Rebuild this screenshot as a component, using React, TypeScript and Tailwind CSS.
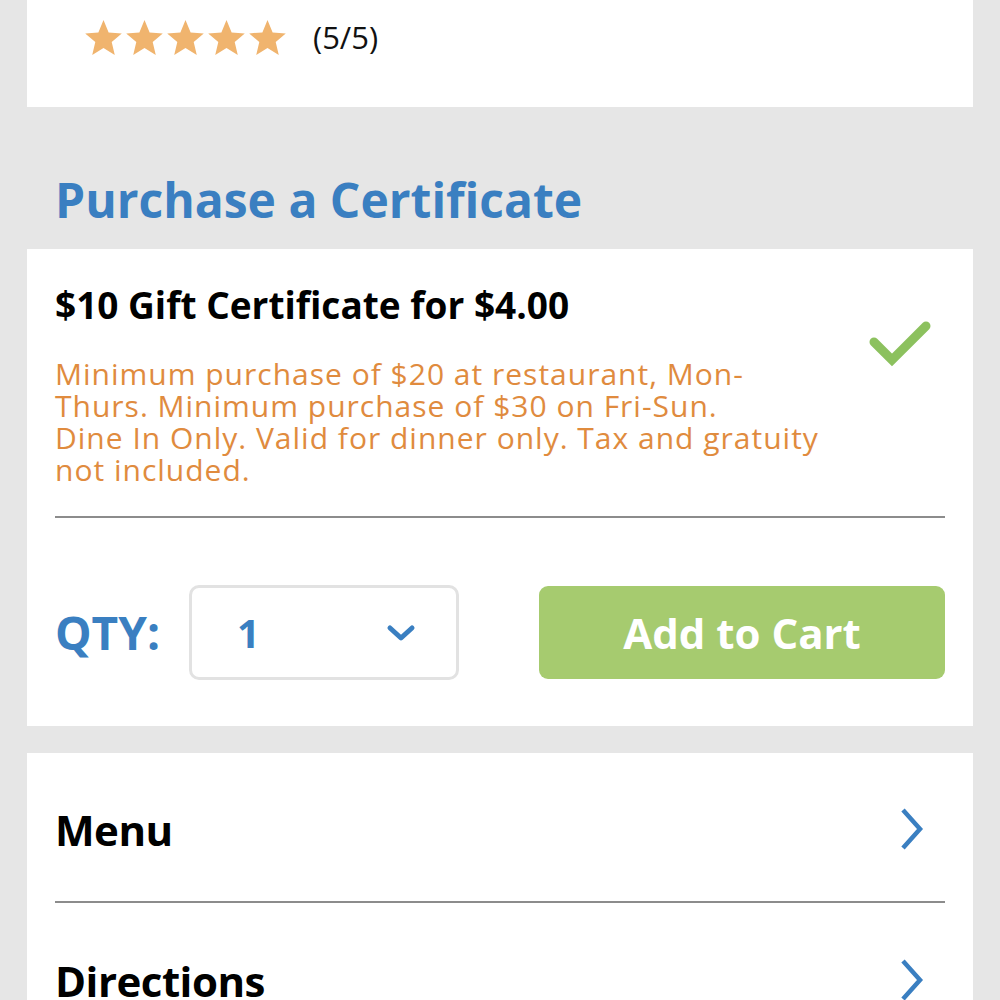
import React from "react";

const Star: React.FC = () => (
  <svg viewBox="0 0 24 24" className="w-[41px] h-[41px]" fill="#f0b46e">
    <path d="M12 1.8l3 7.2 7.7.6-5.9 5 1.8 7.6L12 18.1l-6.6 4.1 1.8-7.6-5.9-5 7.7-.6z" />
  </svg>
);

const Chevron: React.FC = () => (
  <svg viewBox="0 0 28 44" className="w-[28px] h-[44px]" fill="none" stroke="#3a7fc1" strokeWidth="4.5">
    <path d="M5 3l17 19L5 41" />
  </svg>
);

const NavRow: React.FC<{ label: string; last?: boolean }> = ({ label, last }) => (
  <div className={`flex items-center justify-between h-[150px] pt-[4px] ${last ? "" : "border-b-2 border-[#8c8c8c]"}`}>
    <span className="text-[42px] font-bold text-black tracking-[-0.5px]">{label}</span>
    <div className="pr-[19px]">
      <Chevron />
    </div>
  </div>
);

export default function App() {
  return (
    <div className="min-h-[1000px] bg-[#e6e6e6] px-[27px] font-['Open_Sans',sans-serif] overflow-hidden">
      {/* rating card */}
      <div className="bg-white h-[107px] pl-[56px] pt-[14px]">
        <div className="flex items-center gap-[25px]">
          <div className="flex">
            <Star />
            <Star />
            <Star />
            <Star />
            <Star />
          </div>
          <span className="text-[31px] text-[#111]">(5/5)</span>
        </div>
      </div>

      {/* heading */}
      <h2 className="h-[142px] flex items-center pl-[28px] pt-[44px] text-[48px] font-bold text-[#3a7fc1]">
        Purchase a Certificate
      </h2>

      {/* certificate card */}
      <div className="bg-white px-[28px] pt-[32px] pb-[46px]">
        <div className="flex justify-between">
          <div>
            <h3 className="text-[37px] font-bold text-black leading-[48px]">$10 Gift Certificate for $4.00</h3>
            <p className="mt-[29px] w-[772px] text-[30px] leading-[32px] tracking-[1px] text-[#e08b3e]">
              Minimum purchase of $20 at restaurant, Mon-Thurs. Minimum purchase of $30 on Fri-Sun.
              <br />
              Dine In Only. Valid for dinner only. Tax and gratuity not included.
            </p>
          </div>
          <svg viewBox="0 0 64 48" className="w-[66px] h-[48px] mt-[39px] mr-[12px]" fill="none" stroke="#8cc15e" strokeWidth="9" strokeLinecap="round">
            <path d="M6 22l18 18L58 6" />
          </svg>
        </div>
        <div className="mt-[30px] border-t-2 border-[#8c8c8c]" />
        <div className="mt-[67px] flex items-center">
          <span className="text-[46px] font-bold text-[#3a7fc1] w-[134px]">QTY:</span>
          <div className="w-[270px] h-[95px] border-[3px] border-[#e2e2e2] rounded-[10px] flex items-center justify-between pl-[45px] pr-[40px]">
            <span className="text-[40px] font-bold text-[#3a7fc1]">1</span>
            <svg viewBox="0 0 30 18" className="w-[30px] h-[18px]" fill="none" stroke="#3a7fc1" strokeWidth="5" strokeLinecap="round" strokeLinejoin="round">
              <path d="M4 4l11 10L26 4" />
            </svg>
          </div>
          <button className="ml-auto w-[406px] h-[93px] rounded-[9px] bg-[#a6cb6f] text-white text-[42px] font-bold">
            Add to Cart
          </button>
        </div>
      </div>

      {/* nav card */}
      <div className="bg-white mt-[27px] px-[28px]">
        <NavRow label="Menu" />
        <NavRow label="Directions" last />
      </div>
    </div>
  );
}
